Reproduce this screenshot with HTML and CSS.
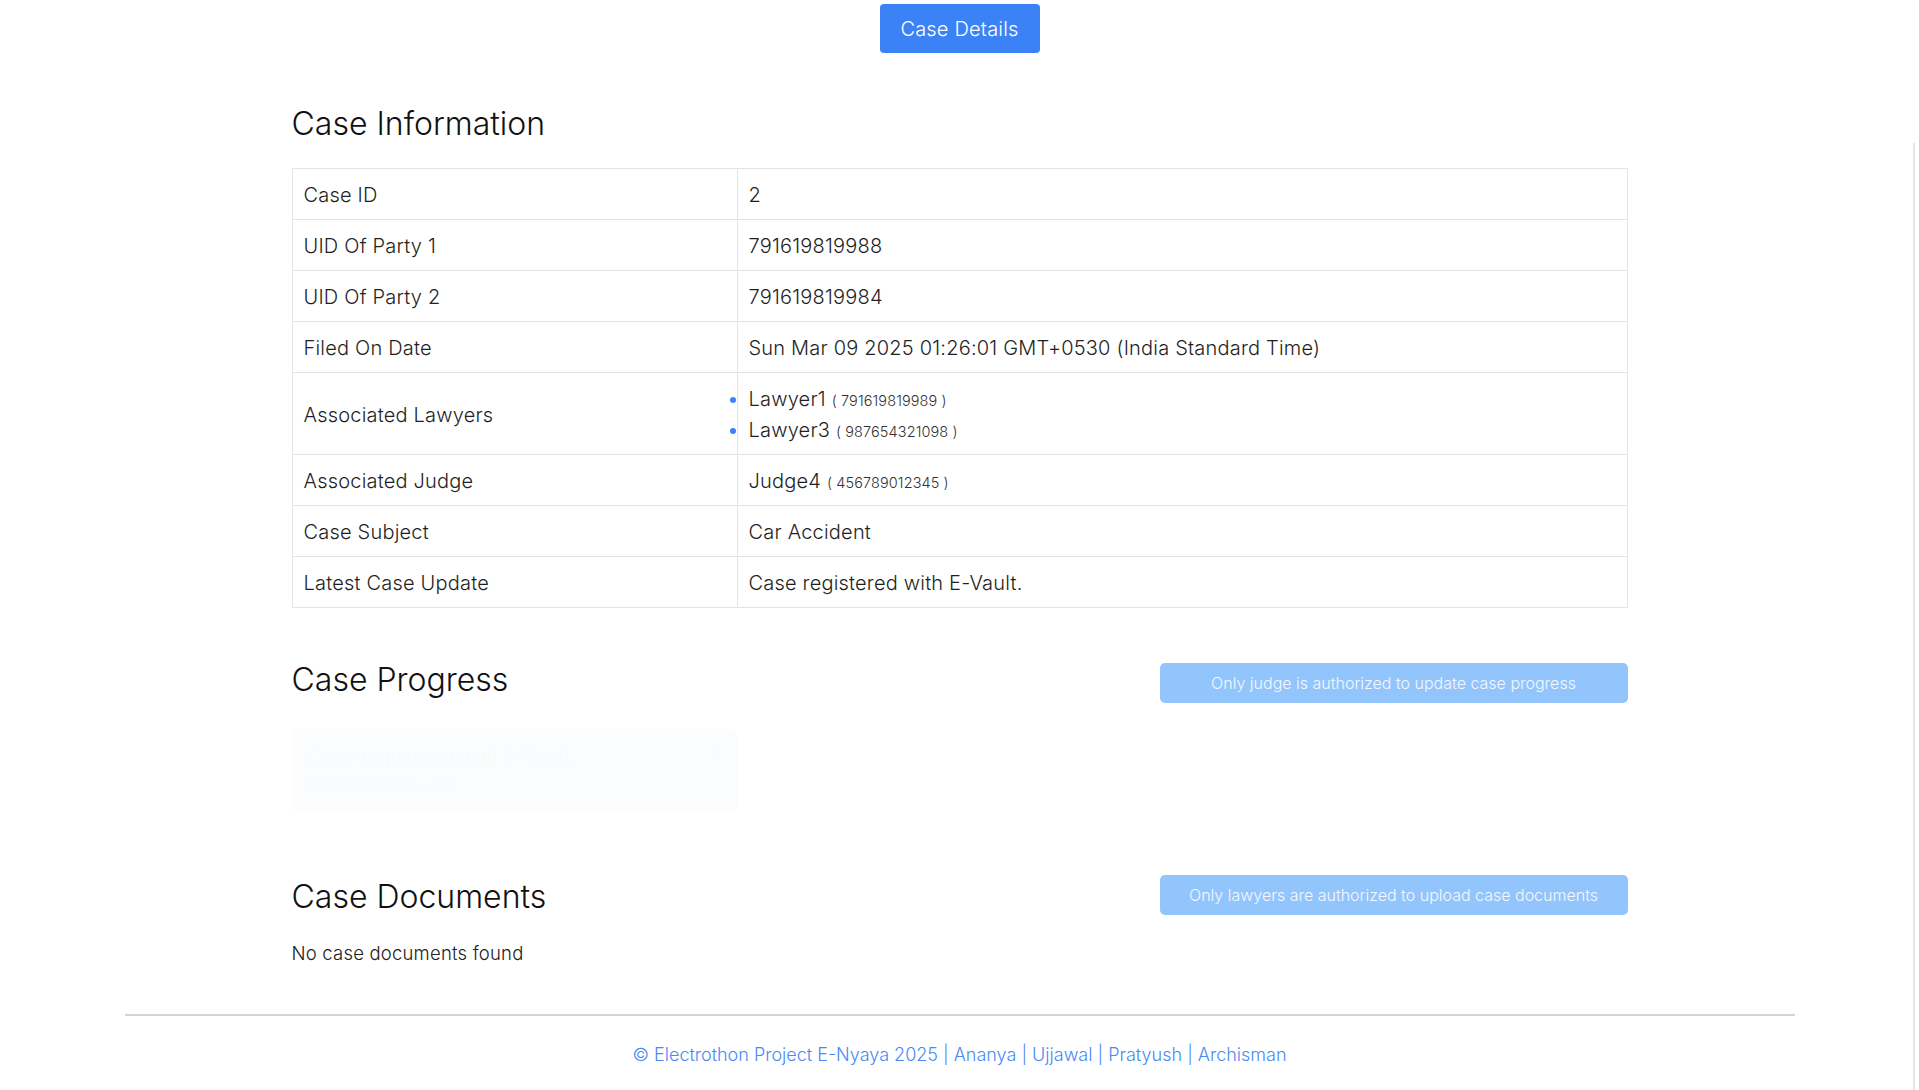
FILE: index.html
```html
<!DOCTYPE html>
<html lang="en">
<head>
<meta charset="utf-8">
<title>Case Details</title>
<link rel="stylesheet" href="styles.css">
</head>
<body>
<div class="edge-line"></div>
<header class="top">
  <button class="btn-primary">Case Details</button>
</header>
<main class="container">
  <h2 class="title title-info">Case Information</h2>
  <table class="info">
    <tr><td class="key">Case ID</td><td>2</td></tr>
    <tr><td class="key">UID Of Party 1</td><td>791619819988</td></tr>
    <tr><td class="key">UID Of Party 2</td><td>791619819984</td></tr>
    <tr><td class="key">Filed On Date</td><td>Sun Mar 09 2025 01:26:01 GMT+0530 (India Standard Time)</td></tr>
    <tr><td class="key">Associated Lawyers</td><td>
      <ul class="lawyers">
        <li>Lawyer1 <span class="uid">( 791619819989 )</span></li>
        <li>Lawyer3 <span class="uid">( 987654321098 )</span></li>
      </ul>
    </td></tr>
    <tr><td class="key">Associated Judge</td><td>Judge4 <span class="uid">( 456789012345 )</span></td></tr>
    <tr><td class="key">Case Subject</td><td>Car Accident</td></tr>
    <tr><td class="key">Latest Case Update</td><td>Case registered with E-Vault.</td></tr>
  </table>

  <div class="section-head progress-head">
    <h2 class="title">Case Progress</h2>
    <button class="btn-disabled">Only judge is authorized to update case progress</button>
  </div>
  <div class="progress-grid">
    <div class="progress-card">
      <div class="card-top">
        <span class="card-title">Case registered with E-Vault.</span>
        <span class="card-num">0</span>
      </div>
      <div class="card-sub">Issued by: 0x5...aa3</div>
    </div>
  </div>

  <div class="section-head docs-head">
    <h2 class="title">Case Documents</h2>
    <button class="btn-disabled">Only lawyers are authorized to upload case documents</button>
  </div>
  <p class="empty">No case documents found</p>
</main>
<footer class="footer">
  <p>© Electrothon Project E-Nyaya 2025 | Ananya | Ujjawal | Pratyush | Archisman</p>
</footer>
</body>
</html>
```
FILE: styles.css
```css
* { box-sizing: border-box; }
html, body { margin: 0; padding: 0; }
body {
  font-family: "Inter", "Noto Sans", sans-serif;
  font-weight: 300;
  color: #1f1f1f;
  background: #fff;
}
.edge-line {
  position: fixed;
  left: 1913px;
  top: 143px;
  width: 2px;
  bottom: 0;
  background: #e6e6e6;
}
.top {
  display: flex;
  justify-content: center;
  padding-top: 4px;
}
.btn-primary {
  font-family: inherit;
  font-weight: 300;
  font-size: 20px;
  letter-spacing: 0.2px;
  line-height: 29px;
  padding: 11px 20px 9px;
  width: 160px;
  color: #fff;
  background: #3b82f6;
  border: 0;
  border-radius: 4px;
}
.container {
  width: 1336px;
  margin: 0 auto;
}
.title {
  margin: 0;
  font-size: 32px;
  line-height: 40px;
  font-weight: 300;
  color: #111;
}
.title-info { margin-top: 51px; margin-bottom: 24px; }
.info {
  width: 100%;
  border-collapse: collapse;
  font-size: 20px;
  letter-spacing: 0.2px;
}
.info td {
  border: 1px solid #e4e4e7;
  padding: 12px 11px 10px;
  line-height: 28px;
  vertical-align: middle;
}
.info td.key { width: 445px; }
.uid { font-size: 14.5px; line-height: 1; color: #333; letter-spacing: 0.1px; }
.lawyers {
  margin: 0;
  padding: 0;
  list-style: disc outside;
}
.lawyers li { line-height: 28px; }
.lawyers li + li { margin-top: 3px; }
.lawyers li::marker { color: #3b82f6; font-size: 20px; }
.section-head {
  display: flex;
  justify-content: space-between;
  align-items: flex-start;
}
.progress-head { margin-top: 52px; }
.progress-head .btn-disabled { margin-top: 3px; }
.btn-disabled {
  width: 468px;
  height: 40px;
  font-family: inherit;
  font-weight: 300;
  font-size: 16px;
  color: #f3f7ff;
  background: #93c5fd;
  border: 0;
  border-radius: 5px;
}
.progress-grid {
  display: grid;
  grid-template-columns: repeat(3, 1fr);
  margin-top: 26px;
}
.progress-card {
  height: 83px;
  padding: 14px 16px;
  background: #f8fafc;
  border-radius: 6px;
  opacity: 0.45;
}
.card-top { display: flex; justify-content: space-between; }
.card-title { font-size: 20px; line-height: 28px; color: #f2f4f7; }
.card-num { font-size: 14px; color: #f2f4f7; }
.card-sub { font-size: 16px; line-height: 26px; color: #f2f4f7; }
.docs-head { margin-top: 63px; }
.docs-head .title { margin-top: 2px; }
.empty {
  margin: 22px 0 0;
  font-size: 18.5px;
  letter-spacing: 0.2px;
  line-height: 28px;
  color: #222;
}
.footer {
  width: 1670px;
  margin: 47px auto 0;
  border-top: 2px solid #d4d4d8;
  text-align: center;
}
.footer p {
  margin: 27px 0 0;
  font-size: 18px;
  line-height: 24px;
  color: #4a8af4;
}
```
